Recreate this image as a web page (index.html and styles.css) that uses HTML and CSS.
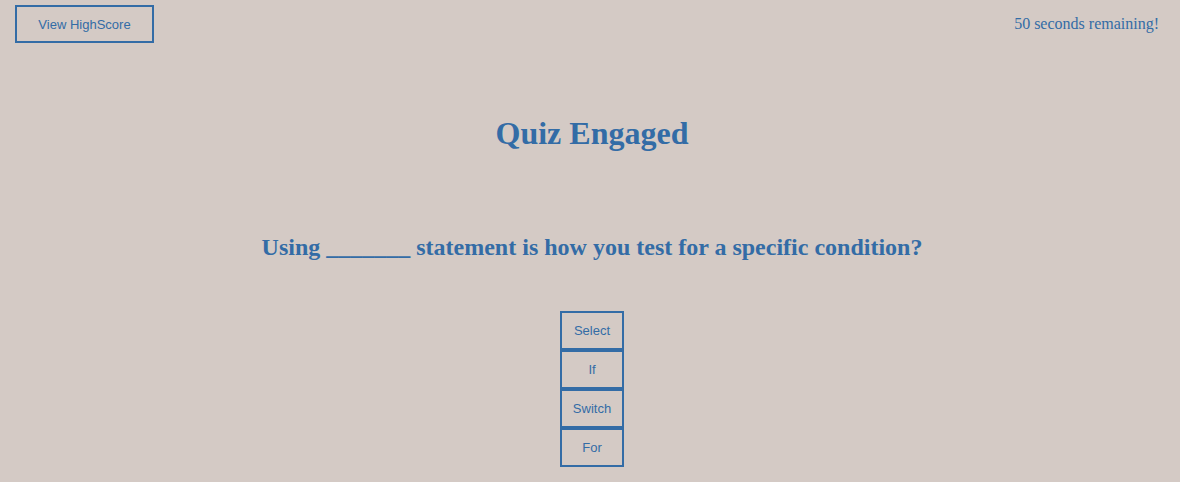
FILE: index.html
```html
<!DOCTYPE html>
<html>
<head>
<meta charset="utf-8">
<link rel="stylesheet" href="styles.css">
</head>
<body>
<header class="top">
  <button class="hs-btn">View HighScore</button>
  <span class="timer">50 seconds remaining!</span>
</header>
<main class="quiz">
  <h1 class="title">Quiz Engaged</h1>
  <h2 class="question">Using _______ statement is how you test for a specific condition?</h2>
  <div class="answers">
    <button class="ans">Select</button>
    <button class="ans">If</button>
    <button class="ans">Switch</button>
    <button class="ans">For</button>
  </div>
</main>
</body>
</html>
```
FILE: styles.css
```css
html, body {
  margin: 0;
  padding: 0;
  background: #d4cac5;
  color: #336ca6;
  font-family: "Liberation Serif", "Times New Roman", serif;
}
.top {
  display: flex;
  justify-content: space-between;
  align-items: center;
  padding: 5px 21px 0 15px;
  height: 38px;
}
.hs-btn {
  box-sizing: border-box;
  width: 139px;
  height: 38px;
  border: 2px solid #336ca6;
  background: transparent;
  color: #336ca6;
  font-family: "Liberation Sans", Arial, sans-serif;
  font-size: 13px;
  padding: 0;
}
.timer {
  font-size: 16px;
}
.quiz {
  display: flex;
  flex-direction: column;
  align-items: center;
  padding-left: 4px;
}
.title {
  margin: 70px 0 0;
  font-size: 32px;
  line-height: 40px;
  font-weight: bold;
}
.question {
  margin: 79px 0 0;
  font-size: 24px;
  line-height: 30px;
  font-weight: bold;
}
.answers {
  margin-top: 49px;
  display: flex;
  flex-direction: column;
}
.ans {
  box-sizing: border-box;
  width: 64px;
  height: 39px;
  border: 2px solid #336ca6;
  background: transparent;
  color: #336ca6;
  font-family: "Liberation Sans", Arial, sans-serif;
  font-size: 13px;
  padding: 0;
}
```
